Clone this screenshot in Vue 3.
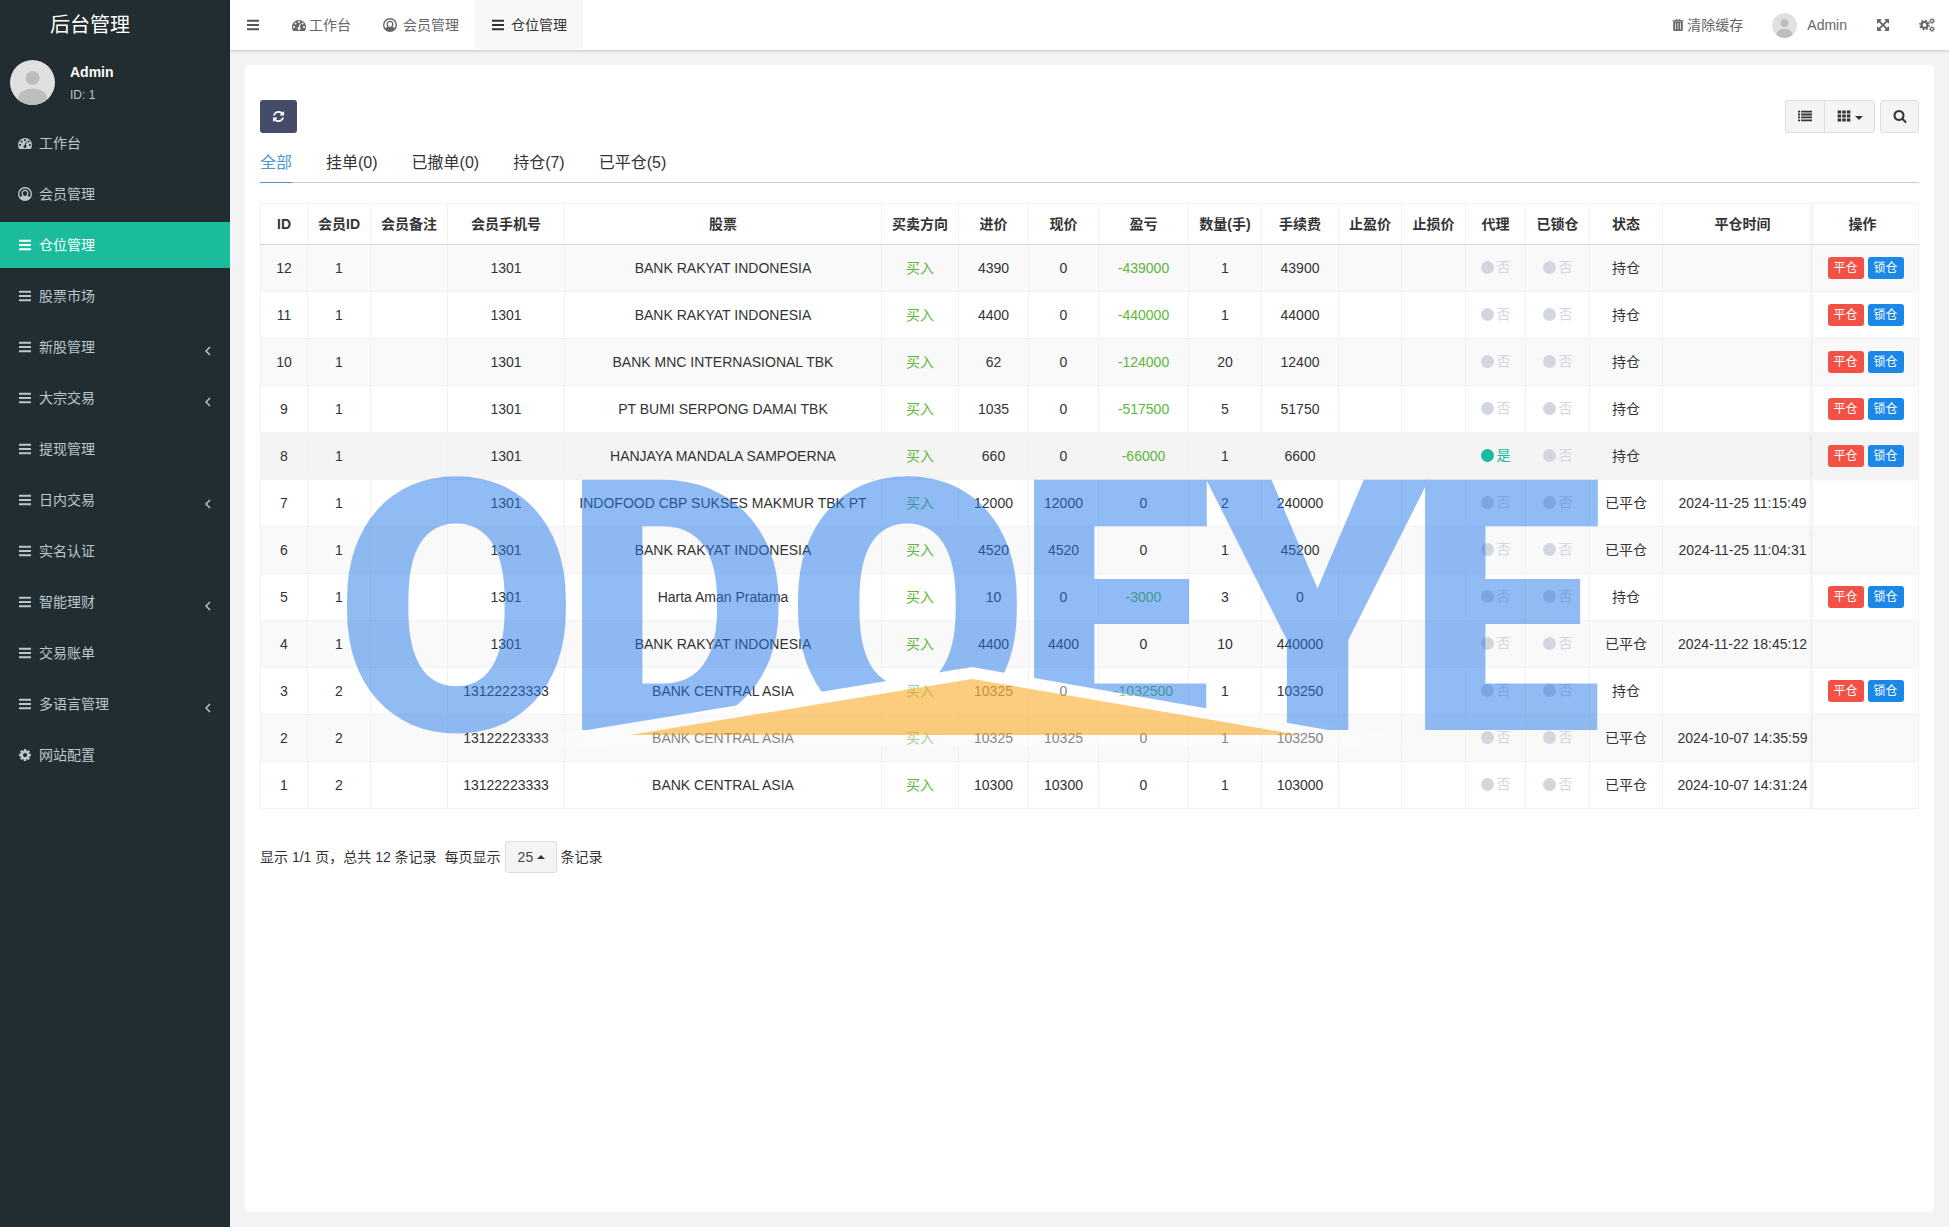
<script setup>
import { ref } from 'vue'

const icons = {
  dashboard: 'M384 1152q0-53-37.500-90.500t-90.500-37.500-90.500 37.500-37.500 90.500 37.500 90.500 90.500 37.500 90.500-37.500 37.500-90.500zm192-448q0-53-37.500-90.500t-90.500-37.500-90.500 37.500-37.500 90.500 37.500 90.500 90.500 37.500 90.500-37.500 37.500-90.500zm428 481l101-382q6-26-7.500-48.500t-38.500-29.500-48 6.500-30 39.500l-101 382q-60 5-107 43.500t-63 98.500q-20 77 20 146t117 89 146-20 89-117q16-60-6-117t-72-91zm660-33q0-53-37.500-90.500t-90.500-37.500-90.500 37.500-37.500 90.500 37.500 90.500 90.500 37.500 90.500-37.500 37.500-90.500zm-640-640q0-53-37.500-90.500t-90.500-37.500-90.500 37.500-37.500 90.500 37.500 90.500 90.500 37.500 90.500-37.500 37.500-90.500zm448 192q0-53-37.500-90.500t-90.500-37.500-90.500 37.500-37.500 90.500 37.500 90.500 90.500 37.500 90.500-37.500 37.500-90.500zm320 448q0 261-141 483-19 29-54 29h-1402q-35 0-54-29-141-221-141-483 0-182 71-348t191-286 286-191 348-71 348 71 286 191 191 286 71 348z',
  user: 'M896 0a896 896 0 1 0 0 1792a896 896 0 1 0 0-1792zM896 190a706 706 0 0 1 560 1136q-60-170-240-200q120-140 120-340c0-270-180-450-440-450s-440 180-440 450q0 200 120 340q-180 30-240 200a706 706 0 0 1 560-1136zM896 500c160 0 270 110 270 280q0 150-80 260q-90 100-190 100t-190-100q-80-110-80-260c0-170 110-280 270-280z',
  bars: 'M128 226h1536v240h-1536zM128 776h1536v240h-1536zM128 1326h1536v240h-1536z',
  cog: 'M1152 896q0-106-75-181t-181-75-181 75-75 181 75 181 181 75 181-75 75-181zm512-109v222q0 12-8 23t-20 13l-185 28q-19 54-39 91 35 50 107 138 10 12 10 25t-9 23q-27 37-99 108t-94 71q-12 0-26-9l-138-108q-44 23-91 38-16 136-29 186-7 28-36 28h-222q-14 0-24.500-8.500t-11.500-21.500l-28-184q-49-16-90-37l-141 107q-10 9-25 9-14 0-25-11-126-114-165-168-7-10-7-23 0-12 8-23 15-21 51-66.500t54-70.500q-27-50-41-99l-183-27q-13-2-21-12.500t-8-23.500v-222q0-12 8-23t19-13l186-28q14-46 39-92-40-57-107-138-10-12-10-24 0-10 9-23 26-36 98.500-107.500t94.500-71.500q13 0 26 10l138 107q44-23 91-38 16-136 29-186 7-28 36-28h222q14 0 24.500 8.500t11.500 21.500l28 184q49 16 90 37l142-107q9-9 24-9 13 0 25 10 129 119 165 170 7 8 7 22 0 12-8 23-15 21-51 66.500t-54 70.500q26 50 41 98l183 28q13 2 21 12.500t8 23.500z',
  refresh: 'M1639 1056q0 5-1 7-64 268-268 434.500t-478 166.500q-146 0-282.500-55t-243.500-157l-129 129q-19 19-45 19t-45-19-19-45v-448q0-26 19-45t45-19h448q26 0 45 19t19 45-19 45l-137 137q71 66 161 102t187 36q134 0 250-65t186-179q11-17 53-117 8-23 30-23h192q13 0 22.500 9.500t9.500 22.500zm25-800v448q0 26-19 45t-45 19h-448q-26 0-45-19t-19-45 19-45l138-138q-148-137-349-137-134 0-250 65t-186 179q-11 17-53 117-8 23-30 23h-199q-13 0-22.500-9.500t-9.500-22.500v-7q65-268 270-434.500t480-166.500q146 0 284 55.500t245 156.500l130-129q19-19 45-19t45 19 19 45z',
  expand: 'M1411 541l-355 355 355 355 144-144q29-31 70-14 39 17 39 59v448q0 26-19 45t-45 19h-448q-42 0-59-40-17-39 14-69l144-144-355-355-355 355 144 144q31 30 14 69-17 40-59 40h-448q-26 0-45-19t-19-45v-448q0-42 40-59 39-17 69 14l144 144 355-355-355-355-144 144q-19 19-45 19-12 0-24-5-40-17-40-59v-448q0-26 19-45t45-19h448q42 0 59 40 17 39-14 69l-144 144 355 355 355-355-144-144q-31-30-14-69 17-40 59-40h448q26 0 45 19t19 45v448q0 42-39 59-13 5-25 5-26 0-45-19z',
  search: 'M1216 832q0-185-131.500-316.500t-316.500-131.500-316.500 131.500-131.500 316.500 131.500 316.500 316.500 131.500 316.500-131.500 131.500-316.500zm512 832q0 52-38 90t-90 38q-54 0-90-38l-343-342q-179 124-399 124-143 0-273.500-55.500t-225-150-150-225-55.500-273.500 55.500-273.500 150-225 225-150 273.500-55.500 273.500 55.500 225 150 150 225 55.500 273.500q0 220-124 399l343 343q37 37 37 90z',
  trash: 'M640 128h512l80 160h368v128h-1408v-128h368zM720 200l-44 88h440l-44-88zM288 450h1216v1100q0 110-100 110h-1016q-100 0-100-110zM540 620v860h100v-860zM846 620v860h100v-860zM1152 620v860h100v-860z',
  list: 'M0 220h260v230h-260zM400 220h1392v230h-1392zM0 590h260v230h-260zM400 590h1392v230h-1392zM0 960h260v230h-260zM400 960h1392v230h-1392zM0 1330h260v230h-260zM400 1330h1392v230h-1392z',
  grid: 'M80 200h450v370h-450zM670 200h450v370h-450zM1260 200h450v370h-450zM80 710h450v370h-450zM670 710h450v370h-450zM1260 710h450v370h-450zM80 1220h450v370h-450zM670 1220h450v370h-450zM1260 1220h450v370h-450z',
}

const menu = [
  { label: '工作台', icon: 'dashboard' },
  { label: '会员管理', icon: 'user' },
  { label: '仓位管理', icon: 'bars', active: true },
  { label: '股票市场', icon: 'bars' },
  { label: '新股管理', icon: 'bars', sub: true },
  { label: '大宗交易', icon: 'bars', sub: true },
  { label: '提现管理', icon: 'bars' },
  { label: '日内交易', icon: 'bars', sub: true },
  { label: '实名认证', icon: 'bars' },
  { label: '智能理财', icon: 'bars', sub: true },
  { label: '交易账单', icon: 'bars' },
  { label: '多语言管理', icon: 'bars', sub: true },
  { label: '网站配置', icon: 'cog' },
]

const filters = ['全部', '挂单(0)', '已撤单(0)', '持仓(7)', '已平仓(5)']
const activeFilter = ref(0)
const pageSize = ref('25')

const columns = ['ID', '会员ID', '会员备注', '会员手机号', '股票', '买卖方向', '进价', '现价', '盈亏', '数量(手)', '手续费', '止盈价', '止损价', '代理', '已锁仓', '状态', '平仓时间', '操作']

const row = (id, member, phone, stock, open, now, profit, qty, fee, closedAt = '', agent = false) =>
  ({ id, member, phone, stock, open, now, profit, qty, fee, closedAt, agent })

const rows = [
  row(12, 1, '1301', 'BANK RAKYAT INDONESIA', 4390, 0, -439000, 1, 43900),
  row(11, 1, '1301', 'BANK RAKYAT INDONESIA', 4400, 0, -440000, 1, 44000),
  row(10, 1, '1301', 'BANK MNC INTERNASIONAL TBK', 62, 0, -124000, 20, 12400),
  row(9, 1, '1301', 'PT BUMI SERPONG DAMAI TBK', 1035, 0, -517500, 5, 51750),
  row(8, 1, '1301', 'HANJAYA MANDALA SAMPOERNA', 660, 0, -66000, 1, 6600, '', true),
  row(7, 1, '1301', 'INDOFOOD CBP SUKSES MAKMUR TBK PT', 12000, 12000, 0, 2, 240000, '2024-11-25 11:15:49'),
  row(6, 1, '1301', 'BANK RAKYAT INDONESIA', 4520, 4520, 0, 1, 45200, '2024-11-25 11:04:31'),
  row(5, 1, '1301', 'Harta Aman Pratama', 10, 0, -3000, 3, 0),
  row(4, 1, '1301', 'BANK RAKYAT INDONESIA', 4400, 4400, 0, 10, 440000, '2024-11-22 18:45:12'),
  row(3, 2, '13122223333', 'BANK CENTRAL ASIA', 10325, 0, -1032500, 1, 103250),
  row(2, 2, '13122223333', 'BANK CENTRAL ASIA', 10325, 10325, 0, 1, 103250, '2024-10-07 14:35:59'),
  row(1, 2, '13122223333', 'BANK CENTRAL ASIA', 10300, 10300, 0, 1, 103000, '2024-10-07 14:31:24'),
]
</script>

<template>
  <div class="layout">
    <aside class="sidebar">
      <a href="#" class="brand">后台管理</a>
      <div class="profile">
        <svg class="avatar" viewBox="0 0 45 45" aria-hidden="true">
          <clipPath id="face"><circle cx="22.5" cy="22.5" r="22.5" /></clipPath>
          <g clip-path="url(#face)">
            <rect width="45" height="45" fill="#e0e0e0" />
            <circle cx="22.500" cy="18" r="7" fill="#bdbdbd" />
            <ellipse cx="22.500" cy="38" rx="14.500" ry="9.500" fill="#bdbdbd" />
          </g>
        </svg>
        <div>
          <p class="name">Admin</p>
          <p class="uid">ID: 1</p>
        </div>
      </div>
      <nav class="menu">
        <a v-for="m in menu" :key="m.label" href="#" :class="{ active: m.active }">
          <svg class="icon" viewBox="0 0 1792 1792"><path :d="icons[m.icon]" fill-rule="evenodd" /></svg>
          <span>{{ m.label }}</span>
          <svg v-if="m.sub" class="arrow" viewBox="0 0 6 10"><path d="M5 1L1 5l4 4" /></svg>
        </a>
      </nav>
    </aside>

    <div class="content">
      <header class="topbar">
        <button class="toggle" type="button" aria-label="菜单">
          <svg class="icon" viewBox="0 0 1792 1792"><path :d="icons.bars" /></svg>
        </button>
        <nav class="tabs">
          <a href="#" class="tight"><svg class="icon" viewBox="0 0 1792 1792"><path :d="icons.dashboard" fill-rule="evenodd" /></svg>工作台</a>
          <a href="#"><svg class="icon" viewBox="0 0 1792 1792"><path :d="icons.user" fill-rule="evenodd" /></svg>会员管理</a>
          <a href="#" class="active"><svg class="icon" viewBox="0 0 1792 1792"><path :d="icons.bars" /></svg>仓位管理</a>
        </nav>
        <nav class="tools">
          <a href="#" class="clear"><svg class="icon" viewBox="0 0 1792 1792"><path :d="icons.trash" fill-rule="evenodd" /></svg>清除缓存</a>
          <a href="#" class="account">
            <svg class="avatar" viewBox="0 0 45 45" aria-hidden="true">
              <g clip-path="url(#face)">
                <rect width="45" height="45" fill="#e0e0e0" />
                <circle cx="22.500" cy="18" r="7" fill="#bdbdbd" />
                <ellipse cx="22.500" cy="38" rx="14.500" ry="9.500" fill="#bdbdbd" />
              </g>
            </svg>
            Admin
          </a>
          <a href="#" aria-label="全屏"><svg class="icon" viewBox="0 0 1792 1792"><path :d="icons.expand" /></svg></a>
          <a href="#" aria-label="设置">
            <svg class="cogs" viewBox="0 0 16 14">
              <g fill="none">
                <circle cx="5.500" cy="7" r="3" stroke-width="2.200" />
                <circle cx="5.500" cy="7" r="4.700" stroke-width="1.400" stroke-dasharray="1.850 1.840" />
                <circle cx="13" cy="3" r="1.500" stroke-width="1.200" />
                <circle cx="13" cy="3" r="2.400" stroke-width="1" stroke-dasharray="1 0.880" />
                <circle cx="13" cy="11" r="1.500" stroke-width="1.200" />
                <circle cx="13" cy="11" r="2.400" stroke-width="1" stroke-dasharray="1 0.880" />
              </g>
            </svg>
          </a>
        </nav>
      </header>

      <main class="panel">
        <div class="toolbar">
          <button class="refresh" type="button" aria-label="刷新">
            <svg class="icon" viewBox="0 0 1792 1792"><path :d="icons.refresh" /></svg>
          </button>
          <div class="actions">
            <div class="group">
              <button type="button" aria-label="切换"><svg class="icon" viewBox="0 0 1792 1792"><path :d="icons.list" /></svg></button>
              <button type="button" aria-label="列" class="cols">
                <svg class="icon" viewBox="0 0 1792 1792"><path :d="icons.grid" /></svg>
                <svg class="caret" viewBox="0 0 8 4"><path d="M0 0h8l-4 4z" /></svg>
              </button>
            </div>
            <button type="button" class="find" aria-label="搜索"><svg class="icon" viewBox="0 0 1792 1792"><path :d="icons.search" fill-rule="evenodd" /></svg></button>
          </div>
        </div>

        <nav class="filters">
          <a v-for="(f, i) in filters" :key="f" href="#" :class="{ active: i === activeFilter }" @click.prevent="activeFilter = i">{{ f }}</a>
        </nav>

        <div class="table-box">
          <table>
            <colgroup><col v-for="(c, i) in columns" :key="c" :class="'c' + i"></colgroup>
            <thead>
              <tr><th v-for="c in columns" :key="c">{{ c }}</th></tr>
            </thead>
            <tbody>
              <tr v-for="r in rows" :key="r.id" :class="{ current: r.agent }">
                <td>{{ r.id }}</td>
                <td>{{ r.member }}</td>
                <td></td>
                <td>{{ r.phone }}</td>
                <td>{{ r.stock }}</td>
                <td class="green">买入</td>
                <td>{{ r.open }}</td>
                <td>{{ r.now }}</td>
                <td :class="{ green: r.profit < 0 }">{{ r.profit }}</td>
                <td>{{ r.qty }}</td>
                <td>{{ r.fee }}</td>
                <td></td>
                <td></td>
                <td><span class="flag" :class="{ on: r.agent }">{{ r.agent ? '是' : '否' }}</span></td>
                <td><span class="flag">否</span></td>
                <td>{{ r.closedAt ? '已平仓' : '持仓' }}</td>
                <td>{{ r.closedAt }}</td>
                <td>
                  <div v-if="!r.closedAt" class="ops">
                    <button type="button" class="close">平仓</button>
                    <button type="button" class="lock">锁仓</button>
                  </div>
                </td>
              </tr>
            </tbody>
          </table>

          <svg class="watermark" viewBox="0 -100 1280 460" width="1280" height="460">
            <clipPath id="above"><path d="M-20 -20H1280V290H1090V278L632 197L174 272V290H-20z" /></clipPath>
            <linearGradient id="fade">
              <stop offset="0" stop-color="#fff" stop-opacity="0" />
              <stop offset=".15" stop-color="#fff" stop-opacity=".4" />
              <stop offset=".85" stop-color="#fff" stop-opacity=".4" />
              <stop offset="1" stop-color="#fff" stop-opacity="0" />
            </linearGradient>
            <path d="M150 276L632 197L1110 274V276z" fill="url(#fade)" />
            <path d="M290 265L632 209L960 265z" fill="#fa9c00" fill-opacity=".5" />
            <g clip-path="url(#above)" opacity=".5">
              <text class="wordmark" x="-5 223 446 675 867 1066" y="260">ODOEYE</text>
            </g>
          </svg>
        </div>

        <footer class="pager">
          <span>显示 1/1 页，总共 12 条记录</span>
          <label for="page-size">每页显示</label>
          <span class="size">
            <select id="page-size" v-model="pageSize">
              <option>10</option>
              <option>25</option>
              <option>50</option>
            </select>
            <svg class="caret" viewBox="0 0 8 4"><path d="M0 4h8l-4-4z" /></svg>
          </span>
          <span>条记录</span>
        </footer>
      </main>
    </div>
  </div>
</template>

<style>
body {
  background: #f1f3f5;
}
</style>

<style scoped>
* {
  box-sizing: border-box;
}
.layout {
  display: flex;
  min-height: 100vh;
  font: 14px/20px "Liberation Sans", "Noto Sans CJK SC", sans-serif;
  color: #333;
}
a {
  color: inherit;
  text-decoration: none;
}
button,
select {
  font: inherit;
  cursor: pointer;
}
p {
  margin: 0;
}
.icon {
  width: 14px;
  height: 14px;
  fill: currentColor;
  flex: none;
}

/* sidebar */
.sidebar {
  width: 230px;
  flex: none;
  background: #222d32;
  color: #b8c7ce;
}
.brand {
  display: block;
  height: 50px;
  padding-right: 50px;
  line-height: 50px;
  text-align: center;
  font-size: 20px;
  color: #fff;
}
.profile {
  display: flex;
  gap: 15px;
  padding: 10px 10px 15px;
}
.profile .avatar {
  width: 45px;
  height: 45px;
}
.name {
  margin-top: 2px;
  color: #fff;
  font-weight: bold;
}
.uid {
  margin-top: 3px;
  font-size: 12px;
}
.menu {
  display: flex;
  flex-direction: column;
  gap: 5px;
}
.menu a {
  display: flex;
  align-items: center;
  height: 46px;
  padding: 0 19px 0 18px;
  gap: 7px;
}
.menu a.active {
  background: #1abc9c;
  color: #fff;
}
.arrow {
  width: 6px;
  height: 10px;
  margin: 8px 0 0 auto;
  fill: none;
  stroke: currentColor;
  stroke-width: 1.5;
}

/* top bar */
.content {
  flex: 1;
  min-width: 0;
  display: flex;
  flex-direction: column;
}
.topbar {
  display: flex;
  height: 50px;
  background: #fff;
  color: #666;
  box-shadow: 0 1px 3px rgba(0, 0, 0, 0.2);
}
.toggle {
  width: 46px;
  padding: 0;
  border: 0;
  background: none;
  color: #555;
}
.toggle .icon {
  display: block;
  margin: 0 auto;
}
.tabs {
  display: flex;
  height: 49px;
}
.tabs a {
  display: flex;
  align-items: center;
  gap: 6px;
  padding: 0 16px;
}
.tabs a.tight {
  gap: 3px;
}
.tabs a.active {
  background: #f8f8f8;
  color: #333;
}
.tools {
  display: flex;
  align-items: center;
  gap: 29px;
  margin-left: auto;
  padding-right: 14px;
}
.tools a {
  display: flex;
  align-items: center;
}
.clear {
  gap: 2px;
}
.account {
  gap: 10px;
}
.account .avatar {
  width: 25px;
  height: 25px;
}
.cogs {
  width: 16px;
  height: 14px;
  stroke: currentColor;
}

/* panel */
.panel {
  flex: 1;
  margin: 15px;
  padding: 35px 15px 20px;
  background: #fff;
  border-radius: 4px;
}
.toolbar {
  display: flex;
  justify-content: space-between;
}
.refresh {
  width: 37px;
  height: 33px;
  padding: 0;
  border: 0;
  border-radius: 3px;
  background: #444c69;
  color: #fff;
}
.refresh .icon {
  display: block;
  width: 13px;
  height: 13px;
  margin: 0 auto;
}
.actions {
  display: flex;
  gap: 5px;
}
.actions button {
  display: flex;
  align-items: center;
  justify-content: center;
  gap: 4px;
  width: 39px;
  height: 33px;
  padding: 0 0 2px;
  border: 1px solid #ddd;
  border-radius: 3px;
  background: #f4f4f4;
  color: #333;
}
.group {
  display: flex;
}
.group button:first-child {
  border-right: 0;
  border-radius: 3px 0 0 3px;
}
.group .cols {
  width: 51px;
  border-radius: 0 3px 3px 0;
}
.caret {
  width: 8px;
  height: 4px;
  fill: #333;
}
.cols .caret {
  margin-top: 4px;
}
.filters {
  display: flex;
  gap: 34px;
  height: 50px;
  margin-bottom: 20px;
  border-bottom: 1px solid #ccc;
  font-size: 16px;
}
.filters a {
  display: flex;
  align-items: center;
  height: 50px;
  padding-top: 10px;
}
.filters .active {
  color: #4b97d0;
  border-bottom: 1px solid #4b97d0;
}

/* table */
.table-box {
  position: relative;
}
table {
  width: 100%;
  table-layout: fixed;
  border-collapse: collapse;
}
.c0 { width: 47px; }
.c1, .c11 { width: 63px; }
.c2, .c5, .c10 { width: 77px; }
.c3 { width: 117px; }
.c6, .c7 { width: 70px; }
.c8 { width: 90px; }
.c9, .c15 { width: 73px; }
.c12, .c14 { width: 64px; }
.c13 { width: 60px; }
.c16 { width: 150px; }
.c17 { width: 106px; }
th,
td {
  padding: 0;
  border: 1px solid #f2f2f2;
  text-align: center;
  white-space: nowrap;
}
th {
  height: 41px;
  border-bottom-color: #d8d8d8;
}
td {
  height: 47px;
}
tbody tr:nth-child(odd) {
  background: #f9f9f9;
}
tbody tr.current {
  background: #f4f4f4;
}
th:nth-child(17),
td:nth-child(17) {
  padding-left: 10px;
}
th:last-child,
td:last-child {
  box-shadow: -3px 0 4px -1px rgba(0, 0, 0, 0.08);
}
th:last-child {
  padding-right: 6px;
}
.green {
  color: #5eb63c;
}
.flag {
  display: inline-flex;
  align-items: center;
  gap: 3px;
  color: #d2d6de;
}
.flag::before {
  content: "";
  width: 13px;
  height: 13px;
  border-radius: 50%;
  background: currentColor;
}
.flag.on {
  color: #18bc9c;
}
.ops {
  display: flex;
  justify-content: center;
  gap: 4px;
}
.ops button {
  width: 36px;
  height: 22px;
  padding: 0;
  border: 0;
  border-radius: 3px;
  color: #fff;
  font-size: 12px;
  line-height: 22px;
}
.close {
  background: #f35145;
}
.lock {
  background: #1b87e6;
}
.watermark {
  position: absolute;
  left: 80px;
  top: 167px;
  pointer-events: none;
}
.wordmark {
  font: 900 352px Roboto, "Liberation Sans", sans-serif;
  fill: #2379e9;
}

/* footer */
.pager {
  display: flex;
  align-items: center;
  margin-top: 32px;
}
.pager label {
  margin: 0 4px 0 8px;
}
.size {
  position: relative;
  margin-right: 4px;
}
.size select {
  display: block;
  width: 52px;
  height: 32px;
  padding: 0 0 0 12px;
  appearance: none;
  border: 1px solid #ddd;
  border-radius: 3px;
  background: #f4f4f4;
  color: #444;
}
.size .caret {
  position: absolute;
  right: 12px;
  top: 14px;
  pointer-events: none;
}
</style>
